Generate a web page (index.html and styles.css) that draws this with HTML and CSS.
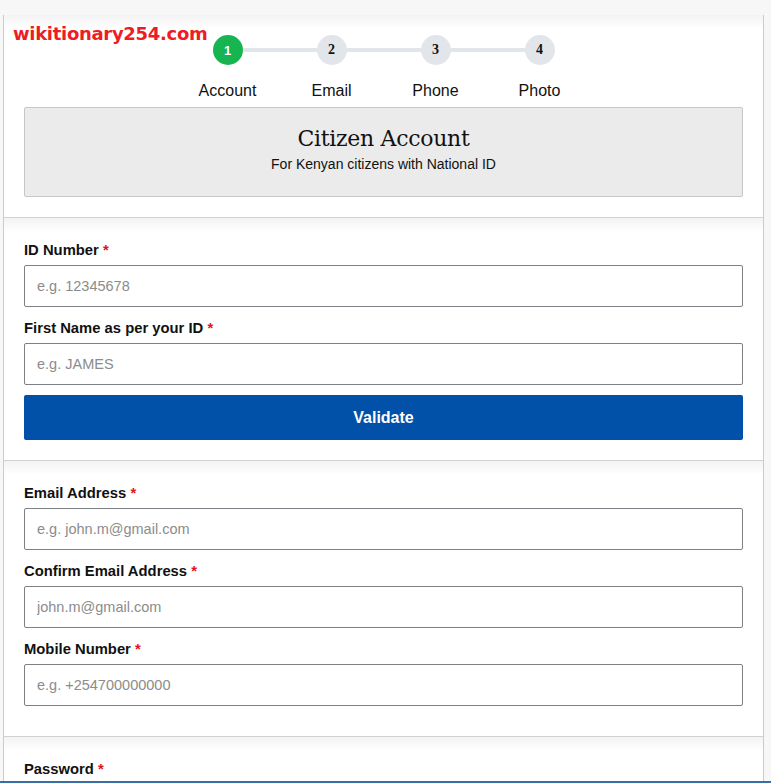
FILE: index.html
```html
<!DOCTYPE html>
<html>
<head>
    <title>Citizen Account</title>
    <link rel="stylesheet" href="styles.css">
</head>
<body>
    <div class="watermark">wikitionary254.com</div>
    <div class="card">
        <div class="section header">
            <div class="steps">
                <div class="step active">
                    <span class="dot">1</span>
                    <span class="step-name">Account</span>
                </div>
                <div class="step">
                    <span class="dot">2</span>
                    <span class="step-name">Email</span>
                </div>
                <div class="step">
                    <span class="dot">3</span>
                    <span class="step-name">Phone</span>
                </div>
                <div class="step">
                    <span class="dot">4</span>
                    <span class="step-name">Photo</span>
                </div>
            </div>
            <div class="banner">
                <h2>Citizen Account</h2>
                <p>For Kenyan citizens with National ID</p>
            </div>
        </div>

        <div class="section">
            <div class="field">
                <label>ID Number <span class="req">*</span></label>
                <input type="text" placeholder="e.g. 12345678">
            </div>
            <div class="field">
                <label>First Name as per your ID <span class="req">*</span></label>
                <input type="text" placeholder="e.g. JAMES">
            </div>
            <button class="btn">Validate</button>
        </div>

        <div class="section">
            <div class="field">
                <label>Email Address <span class="req">*</span></label>
                <input type="text" placeholder="e.g. john.m@gmail.com">
            </div>
            <div class="field">
                <label>Confirm Email Address <span class="req">*</span></label>
                <input type="text" placeholder="john.m@gmail.com">
            </div>
            <div class="field">
                <label>Mobile Number <span class="req">*</span></label>
                <input type="text" placeholder="e.g. +254700000000">
            </div>
        </div>

        <div class="section">
            <div class="field">
                <label>Password <span class="req">*</span></label>
                <input type="password">
            </div>
        </div>
    </div>
    <div class="taskbar"></div>
</body>
</html>
```

FILE: styles.css
```css
body {
    margin: 0;
    background-color: #f7f7f7;
    font-family: "Liberation Sans", Arial, sans-serif;
    color: #111;
}

/* site watermark over the top left corner */
.watermark {
    position: absolute;
    top: 23px;
    left: 13px;
    font-family: "DejaVu Sans", sans-serif;
    font-weight: bold;
    font-size: 18px;
    color: #ee1c25;
    letter-spacing: -0.3px;
}

.card {
    margin: 15px 0 0 3px;
    width: 759px;
    border-left: 1px solid #c9cccc;
    border-right: 1px solid #c9cccc;
    background: #fff;
}

.section {
    padding: 21px 20px 20px 20px;
    border-top: 1px solid #d2d2d2;
    background: linear-gradient(#f3f3f3, #fff 14px);
}

.section.header {
    border-top: none;
    padding-top: 20px;
}

/* step indicator */
.steps {
    display: flex;
    justify-content: center;
    position: relative;
}

.steps::before {
    content: "";
    position: absolute;
    top: 13px;
    left: 50%;
    margin-left: -156px;
    width: 312px;
    height: 4px;
    background: #e2e5e9;
}

.step {
    width: 104px;
    display: flex;
    flex-direction: column;
    align-items: center;
    position: relative;
}

.dot {
    width: 30px;
    height: 30px;
    border-radius: 50%;
    background: #e2e5e9;
    display: flex;
    align-items: center;
    justify-content: center;
    font-family: "Liberation Serif", serif;
    font-weight: bold;
    font-size: 14px;
    color: #111;
}

.step.active .dot {
    background: #17b551;
    color: #fff;
    font-family: "Liberation Sans", Arial, sans-serif;
    font-size: 13px;
}

.step-name {
    margin-top: 17px;
    font-size: 16px;
    line-height: 18px;
}

.banner {
    margin-top: 7px;
    height: 90px;
    background: #ebebeb;
    border: 1px solid #c6c6c6;
    border-radius: 2px;
    text-align: center;
    box-sizing: border-box;
    padding-top: 18px;
}

.banner h2 {
    margin: 0;
    font-family: "DejaVu Serif", serif;
    font-weight: normal;
    font-size: 22px;
    line-height: 26px;
    letter-spacing: -0.3px;
}

.banner p {
    margin: 4px 0 0 0;
    font-size: 14px;
    line-height: 16px;
}

/* form fields */
.field {
    margin-bottom: 10px;
}

.field label {
    display: block;
    font-weight: bold;
    font-size: 14.8px;
    line-height: 22px;
    margin-bottom: 4px;
}

.req {
    color: #e3131b;
}

.field input {
    display: block;
    width: 100%;
    height: 42px;
    box-sizing: border-box;
    border: 1px solid #7d8185;
    border-radius: 2px;
    padding: 0 12px;
    font-family: "Liberation Sans", Arial, sans-serif;
    font-size: 14.5px;
    background: #fff;
}

.field input::placeholder {
    color: #8c8c8c;
}

.btn {
    display: block;
    width: 100%;
    height: 45px;
    border: none;
    border-radius: 2px;
    background: #0151a9;
    color: #fff;
    font-family: "Liberation Sans", Arial, sans-serif;
    font-weight: bold;
    font-size: 16px;
}

.taskbar {
    position: fixed;
    left: 0;
    bottom: 0;
    width: 100%;
    height: 2px;
    background: #3b6ea3;
}
```
